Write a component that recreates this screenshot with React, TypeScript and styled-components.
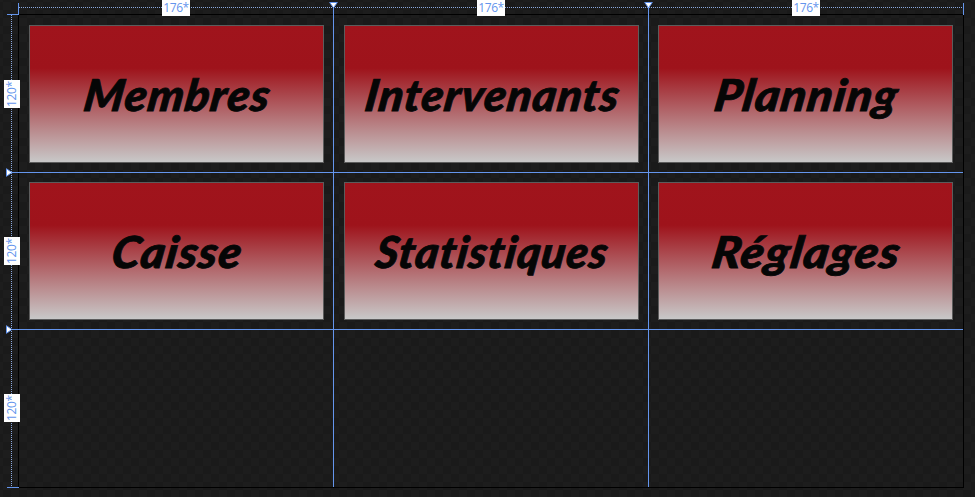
import React from "react";
import styled, { createGlobalStyle } from "styled-components";

const BLUE = "#6495ed";

const GlobalStyle = createGlobalStyle`
  html, body { margin: 0; padding: 0; background: #1c1c1c; overflow: hidden; }
`;

const Designer = styled.main`
  position: relative;
  box-sizing: border-box;
  width: 975px;
  height: 497px;
  display: grid;
  grid-template-columns: 18px 946px;
  grid-template-rows: 14px 474px;
  background: repeating-conic-gradient(#1a1a1a 0% 25%, #1d1d1d 0% 50%) 3px 2px / 16px 16px;
  font-family: "Open Sans", "Noto Sans", sans-serif;
`;

const TopRuler = styled.div`
  grid-column: 2;
  display: grid;
  grid-template-columns: 316px 314px 316px;
  justify-items: center;
  background: repeating-linear-gradient(90deg, transparent 0 1px, #8ba9e0 1px 2px) 0 7px / 100% 1px no-repeat;
`;

const LeftRuler = styled.div`
  grid-row: 2;
  display: grid;
  grid-template-rows: 160px 154px 160px;
  align-items: center;
  background: repeating-linear-gradient(180deg, transparent 0 1px, #8ba9e0 1px 2px) 11px 0 / 1px 100% no-repeat;
`;

const SizeTag = styled.span<{ $vertical?: boolean }>`
  z-index: 3;
  box-sizing: border-box;
  display: flex;
  align-items: center;
  justify-content: center;
  width: ${(p) => (p.$vertical ? 16 : 28)}px;
  height: ${(p) => (p.$vertical ? 28 : 16)}px;
  margin-left: ${(p) => (p.$vertical ? 4 : 0)}px;
  background: #fff;
  color: ${BLUE};
  font-size: 12px;
  letter-spacing: -0.4px;
  line-height: 16px;
  writing-mode: ${(p) => (p.$vertical ? "vertical-rl" : "horizontal-tb")};
  transform: ${(p) => (p.$vertical ? "rotate(180deg)" : "none")};
`;

const Surface = styled.section`
  box-sizing: border-box;
  border: 1px solid #000;
  display: grid;
  grid-template-columns: 315px 314px 315px;
  grid-template-rows: 157px 157px 158px;
`;

const Tile = styled.button`
  box-sizing: border-box;
  width: 295px;
  height: 138px;
  margin: 10px 0 0 10px;
  padding: 0;
  border: 1px solid #5c5c5c;
  display: flex;
  align-items: center;
  justify-content: center;
  background: linear-gradient(#a0141c 0%, #9e131b 31%, #c8c8c8 100%);
`;

const Caption = styled.span<{ $stretch: number }>`
  font: italic 900 44px/44px Lato, "Open Sans", sans-serif;
  font-variant-ligatures: none;
  letter-spacing: 1px;
  color: #060606;
  -webkit-text-stroke: 0.8px #060606;
  white-space: nowrap;
  transform: translateX(1.5px) scaleX(${(p) => p.$stretch}) skewX(-8deg);
`;

const Guide = styled.i<{ $column?: boolean; $at: number }>`
  position: absolute;
  background: ${BLUE};
  ${(p) =>
    p.$column
      ? `left: ${p.$at}px; top: 7px; width: 1px; height: 480px;`
      : `top: ${p.$at}px; left: 11px; width: 952px; height: 1px;`}
`;

const Tick = styled.i<{ $x: number; $y: number; $flat?: boolean }>`
  position: absolute;
  left: ${(p) => p.$x}px;
  top: ${(p) => p.$y}px;
  width: ${(p) => (p.$flat ? 12 : 1)}px;
  height: ${(p) => (p.$flat ? 1 : 12)}px;
  background: ${BLUE};
`;

const Handle = styled.svg<{ $x: number; $y: number }>`
  position: absolute;
  left: ${(p) => p.$x}px;
  top: ${(p) => p.$y}px;
`;

const tiles = [
  { name: "Membres", stretch: 1.03 },
  { name: "Intervenants", stretch: 1.02 },
  { name: "Planning", stretch: 1.06 },
  { name: "Caisse", stretch: 1.05 },
  { name: "Statistiques", stretch: 1 },
  { name: "Réglages", stretch: 1.09 },
];

export default function App() {
  return (
    <>
      <GlobalStyle />
      <Designer>
        <TopRuler>
          {[0, 1, 2].map((i) => <SizeTag key={i}>176*</SizeTag>)}
        </TopRuler>
        <LeftRuler>
          {[0, 1, 2].map((i) => <SizeTag key={i} $vertical>120*</SizeTag>)}
        </LeftRuler>
        <Surface>
          {tiles.map((t) => (
            <Tile key={t.name}>
              <Caption $stretch={t.stretch}>{t.name}</Caption>
            </Tile>
          ))}
        </Surface>
        {[333, 648].map((x) => <Guide key={x} $column $at={x} />)}
        {[172, 329].map((y) => <Guide key={y} $at={y} />)}
        <Tick $x={18} $y={3} />
        <Tick $x={963} $y={3} />
        <Tick $x={7} $y={14} $flat />
        <Tick $x={7} $y={487} $flat />
        {[329, 644].map((x) => (
          <Handle key={x} $x={x} $y={2} width="9" height="7" viewBox="0 0 9 7">
            <path d="M.7.5h7.6L4.5 5.8z" fill="#fff" stroke={BLUE} />
          </Handle>
        ))}
        {[168, 325].map((y) => (
          <Handle key={y} $x={6} $y={y} width="7" height="9" viewBox="0 0 7 9">
            <path d="M.5.7v7.6L5.8 4.5z" fill="#fff" stroke={BLUE} />
          </Handle>
        ))}
      </Designer>
    </>
  );
}
